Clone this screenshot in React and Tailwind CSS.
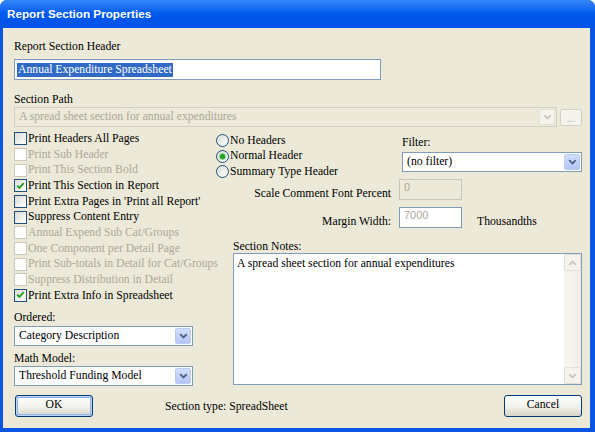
import clsx from "clsx";

function Chevron({ up, color }) {
    return (
        <svg width="9" height="6" viewBox="0 0 9 6" className={clsx(up && "rotate-180")}>
            <path d="M1.2 1.2 L4.5 4.5 L7.8 1.2" fill="none" stroke={color} strokeWidth="1.8" />
        </svg>
    );
}

function Check({ label, checked, disabled }) {
    return (
        <div className="flex h-[15.67px] items-center whitespace-nowrap">
            <span
                className={clsx(
                    "w-[13px] h-[13px] border shrink-0 flex items-center justify-center",
                    disabled ? "border-[#CAC8BB] bg-white" : "border-[#1C5180] bg-linear-to-br from-[#DCDCD7] to-white"
                )}
            >
                {checked && (
                    <svg width="9" height="8" viewBox="0 0 9 8">
                        <path d="M1.2 3.6 L3.4 5.8 L7.8 1.2" fill="none" stroke="#21A121" strokeWidth="1.9" />
                    </svg>
                )}
            </span>
            <span className={clsx("ml-[1px]", disabled && "text-[#ACA899]")}>{label}</span>
        </div>
    );
}

function Radio({ label, checked }) {
    return (
        <div className="flex h-[15.5px] items-center whitespace-nowrap">
            <span className="w-[13px] h-[13px] rounded-full border border-[#1C5180] bg-linear-to-br from-[#DCDCD7] to-white flex items-center justify-center shrink-0">
                {checked && <span className="w-[5px] h-[5px] rounded-full bg-[#21A121] ring-1 ring-[#8FD48F]" />}
            </span>
            <span className="ml-[1px]">{label}</span>
        </div>
    );
}

function Combo({ value, disabled, className }) {
    return (
        <div
            className={clsx(
                "h-[20px] border flex items-center",
                disabled ? "border-[#D3D0C2] bg-[#ECE9D8] text-[#ACA899]" : "border-[#7F9DB9] bg-white",
                className
            )}
        >
            <span className="flex-1 pl-[4px] whitespace-nowrap overflow-hidden">{value}</span>
            <span
                className={clsx(
                    "w-[16px] h-[16px] mr-[1px] rounded-[2px] border flex items-center justify-center",
                    disabled
                        ? "border-[#E3E1D6] bg-[#F4F3EE]"
                        : "border-[#B9CCF5] bg-linear-to-b from-[#D2DFFC] to-[#B2C6F5]"
                )}
            >
                <Chevron color={disabled ? "#C9C7BA" : "#4D6185"} />
            </span>
        </div>
    );
}

function XpButton({ children, focused }) {
    return (
        <button
            className={clsx(
                "w-[78px] h-[22px] rounded-[3px] border border-[#003C74] bg-linear-to-b from-white via-[#F4F3EE] to-[#D8D4C8] leading-none pb-[2px]",
                focused && "shadow-[inset_0_0_0_1px_#BCD5F8,inset_0_0_0_2px_#8DB2EE]"
            )}
        >
            {children}
        </button>
    );
}

const checks = [
    { label: "Print Headers All Pages" },
    { label: "Print Sub Header", disabled: true },
    { label: "Print This Section Bold", disabled: true },
    { label: "Print This Section in Report", checked: true },
    { label: "Print Extra Pages in 'Print all Report'" },
    { label: "Suppress Content Entry" },
    { label: "Annual Expend Sub Cat/Groups", disabled: true },
    { label: "One Component per Detail Page", disabled: true },
    { label: "Print Sub-totals in Detail for Cat/Groups", disabled: true },
    { label: "Suppress Distribution in Detail", disabled: true },
    { label: "Print Extra Info in Spreadsheet", checked: true },
];

export default function App() {
    return (
        <div className="w-[595px] h-[432px] bg-white overflow-hidden">
            <div className="w-full h-full flex flex-col rounded-t-[7px] bg-[#0B55E3] overflow-hidden font-['Liberation_Serif',serif] text-[11.7px] text-black">
                {/* title bar */}
                <div className="h-[28px] shrink-0 flex items-center pl-[7px] bg-linear-to-b from-[#3486F8] via-[#0058EE] to-[#0353E6] text-white font-bold font-['Liberation_Sans',sans-serif] text-[11.7px]">
                    Report Section Properties
                </div>

                <div className="flex-1 ml-[3px] mr-[5px] mb-[4px] bg-[#ECE9D8] pl-[11px] pr-[8px] flex flex-col">
                    <div className="mt-[11px] leading-[15px]">Report Section Header</div>
                    <div className="mt-[5px] w-[367px] h-[21px] border border-[#7F9DB9] bg-white flex items-center pl-[2px]">
                        <span className="bg-[#316AC5] text-white leading-[14px] px-[1px]">Annual Expenditure Spreadsheet</span>
                    </div>

                    <div className="mt-[12px] leading-[15px]">Section Path</div>
                    <div className="flex items-center gap-[3px]">
                        <Combo className="flex-1" disabled value="A spread sheet section for annual expenditures" />
                        <span className="w-[22px] h-[17px] rounded-[2px] border border-[#D3D0C2] bg-[#F4F3EE] text-[#ACA899] text-[10px] flex items-end justify-center leading-[12px] font-['Liberation_Sans',sans-serif]">
                            ...
                        </span>
                    </div>

                    {/* main area */}
                    <div className="mt-[4px] flex">
                        <div className="w-[202px] shrink-0 flex flex-col">
                            {checks.map((c) => (
                                <Check key={c.label} {...c} />
                            ))}
                            <div className="mt-[7px] leading-[15px]">Ordered:</div>
                            <Combo className="mt-[1px] w-[179px]" value="Category Description" />
                            <div className="mt-[5px] leading-[15px]">Math Model:</div>
                            <Combo className="w-[179px]" value="Threshold Funding Model" />
                        </div>

                        <div className="flex-1 flex flex-col">
                            <div className="h-[48px] flex">
                                <div className="w-[186px] pt-[2px] flex flex-col">
                                    <Radio label="No Headers" />
                                    <Radio label="Normal Header" checked />
                                    <Radio label="Summary Type Header" />
                                </div>
                                <div className="flex-1 pt-[4px] flex flex-col">
                                    <div className="leading-[15px]">Filter:</div>
                                    <Combo className="mt-[2px]" value="(no filter)" />
                                </div>
                            </div>

                            <div className="flex items-end h-[21px]">
                                <div className="w-[175px] text-right leading-[15px] mb-[-1px] whitespace-nowrap">Scale Comment Font Percent</div>
                                <div className="ml-[8px] w-[63px] h-[21px] border border-[#C9C7BA] bg-[#ECE9D8] pl-[4px] pt-[1px] text-[11px] leading-[13px] text-[#ACA899] font-['Liberation_Sans',sans-serif]">
                                    0
                                </div>
                            </div>

                            <div className="mt-[7px] flex items-end h-[21px]">
                                <div className="w-[175px] text-right leading-[15px] mb-[-1px]">Margin Width:</div>
                                <div className="ml-[8px] w-[63px] h-[21px] border border-[#7F9DB9] bg-white pl-[4px] pt-[1px] text-[11px] leading-[13px] text-[#ACA899] font-['Liberation_Sans',sans-serif]">
                                    7000
                                </div>
                                <div className="ml-[15px] leading-[15px] mb-[-1px]">Thousandths</div>
                            </div>

                            <div className="pl-[17px] mt-[12px] flex flex-col">
                                <div className="leading-[13px]">Section Notes:</div>
                                <div className="h-[132px] border border-[#7F9DB9] bg-white flex">
                                    <div className="flex-1 pl-[3px] pt-[2px] leading-[15px]">
                                        A spread sheet section for annual expenditures
                                    </div>
                                    <div className="w-[17px] flex flex-col justify-between bg-linear-to-r from-[#F7F6F1] to-[#EFEEE8]">
                                        <span className="h-[17px] rounded-[2px] border border-[#E3E1D6] bg-[#F4F3EE] flex items-center justify-center">
                                            <Chevron up color="#C9C7BA" />
                                        </span>
                                        <span className="h-[17px] rounded-[2px] border border-[#E3E1D6] bg-[#F4F3EE] flex items-center justify-center">
                                            <Chevron color="#C9C7BA" />
                                        </span>
                                    </div>
                                </div>
                            </div>
                        </div>
                    </div>

                    {/* buttons */}
                    <div className="mt-[9px] flex items-center">
                        <div className="ml-[1px]">
                            <XpButton focused>OK</XpButton>
                        </div>
                        <div className="ml-[72px] pt-[2px]">Section type: SpreadSheet</div>
                        <div className="ml-auto">
                            <XpButton>Cancel</XpButton>
                        </div>
                    </div>
                </div>
            </div>
        </div>
    );
}
